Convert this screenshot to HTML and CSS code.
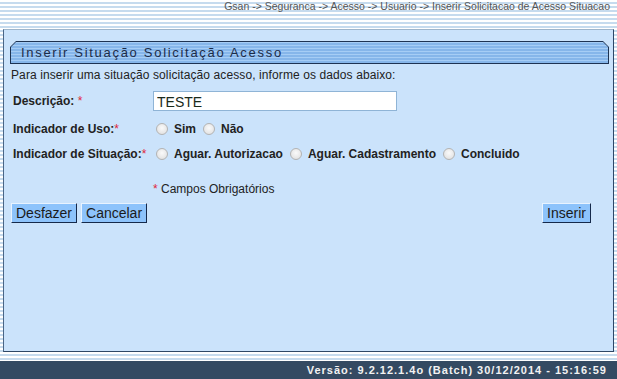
FILE: index.html
```html
<!DOCTYPE html>
<html lang="pt">
<head>
    <meta charset="UTF-8">
    <title>Inserir Situação Solicitação Acesso</title>
    <link rel="stylesheet" href="styles.css">
</head>
<body>
    <div class="crumb">Gsan -&gt; Seguranca -&gt; Acesso -&gt; Usuario -&gt; Inserir Solicitacao de Acesso Situacao</div>

    <div class="panel">
        <div class="bar">
            <div class="bar-inner">Inserir Situação Solicitação Acesso</div>
        </div>

        <p class="intro">Para inserir uma situação solicitação acesso, informe os dados abaixo:</p>

        <div class="form">
            <label class="lbl">Descrição: <span class="req">*</span></label>
            <div><input class="field" type="text" value="TESTE"></div>

            <label class="lbl">Indicador de Uso:<span class="req">*</span></label>
            <div class="opts">
                <label><input type="radio" name="uso"> Sim</label>
                <label><input type="radio" name="uso"> Não</label>
            </div>

            <label class="lbl">Indicador de Situação:<span class="req">*</span></label>
            <div class="opts">
                <label><input type="radio" name="sit"> Aguar. Autorizacao</label>
                <label><input type="radio" name="sit"> Aguar. Cadastramento</label>
                <label><input type="radio" name="sit"> Concluido</label>
            </div>
        </div>

        <p class="note"><span class="req">*</span> Campos Obrigatórios</p>

        <div class="actions">
            <div class="left">
                <button class="btn">Desfazer</button>
                <button class="btn">Cancelar</button>
            </div>
            <button class="btn">Inserir</button>
        </div>
    </div>

    <div class="footer">Versão: 9.2.12.1.4o (Batch) 30/12/2014 - 15:16:59</div>
</body>
</html>
```

FILE: styles.css
```css
body {
    margin: 0;
    height: 379px;
    overflow: hidden;
    font-family: "Liberation Sans", Arial, sans-serif;
    background: repeating-linear-gradient(180deg, #ffffff 0px, #ffffff 2px, #c6dbee 2px, #c6dbee 4px);
}
.crumb {
    height: 15px;
    padding-right: 7px;
    text-align: right;
    font-size: 10.5px;
    line-height: 12px;
    color: #555;
}
.panel {
    margin: 14px 3px 0 3px;
    height: 310px;
    padding: 11px 4px 0 6px;
    background: #cbe3fb;
    border: 1px solid #2e4766;
    border-top-color: #9fb6cc;
    border-left-color: #4a6585;
}
.bar {
    height: 23px;
    background: #1e3352;
    clip-path: polygon(6px 0, calc(100% - 6px) 0, 100% 6px, 100% 100%, 0 100%, 0 6px);
    padding: 1px;
    box-sizing: border-box;
}
.bar-inner {
    height: 100%;
    clip-path: polygon(5px 0, calc(100% - 5px) 0, 100% 5px, 100% 100%, 0 100%, 0 5px);
    background: repeating-linear-gradient(180deg, #a6cdf5 0px, #a6cdf5 1px, #86b6ea 1px, #86b6ea 3px);
    padding-left: 10px;
    font-size: 13px;
    line-height: 21px;
    letter-spacing: 1.7px;
    color: #1c2c48;
}
.intro {
    margin: 4px 0 0 1px;
    font-size: 12px;
    line-height: 14px;
    letter-spacing: 0.1px;
    color: #222;
}
.form {
    display: grid;
    grid-template-columns: 140px auto;
    grid-template-rows: 24px 32px 18px;
    align-items: center;
    margin-top: 7px;
    margin-left: 3px;
}
.lbl {
    font-size: 12px;
    font-weight: bold;
    color: #222;
}
.req {
    color: #e0263a;
    font-weight: normal;
}
.field {
    width: 244px;
    height: 20px;
    box-sizing: border-box;
    border: 1px solid #8fb4d6;
    padding: 1px 3px 0;
    font-family: "Liberation Sans", Arial, sans-serif;
    font-size: 14px;
    color: #1a2a1a;
    background: #fff;
}
.opts {
    display: flex;
    gap: 7px;
    padding-left: 3px;
    font-size: 12px;
    font-weight: bold;
    color: #222;
}
.opts label {
    display: flex;
    align-items: center;
}
.opts input {
    appearance: none;
    -webkit-appearance: none;
    width: 12px;
    height: 12px;
    margin: 0 6px 0 0;
    border-radius: 50%;
    border: 1px solid #b3b3b3;
    background: radial-gradient(circle at 50% 40%, #fafafa 0%, #dcdcdc 100%);
    box-sizing: border-box;
}
.note {
    margin: 19px 0 0 143px;
    font-size: 12px;
    line-height: 14px;
    color: #222;
}
.actions {
    display: flex;
    justify-content: space-between;
    margin-top: 7px;
    padding-right: 18px;
}
.left {
    display: flex;
    gap: 4px;
    margin-left: 1px;
}
.btn {
    height: 20px;
    padding: 0 4px;
    font-family: "Liberation Sans", Arial, sans-serif;
    font-size: 14px;
    line-height: 17px;
    color: #1a1a1a;
    background: #8dc3fb;
    border: 1px solid;
    border-color: #e8f3ff #15294a #15294a #e8f3ff;
}
.footer {
    margin-top: 9px;
    height: 18px;
    background: #344a62;
    color: #f2f2f2;
    text-align: right;
    padding-right: 10px;
    font-size: 11px;
    font-weight: bold;
    line-height: 18px;
    letter-spacing: 1px;
}
```
